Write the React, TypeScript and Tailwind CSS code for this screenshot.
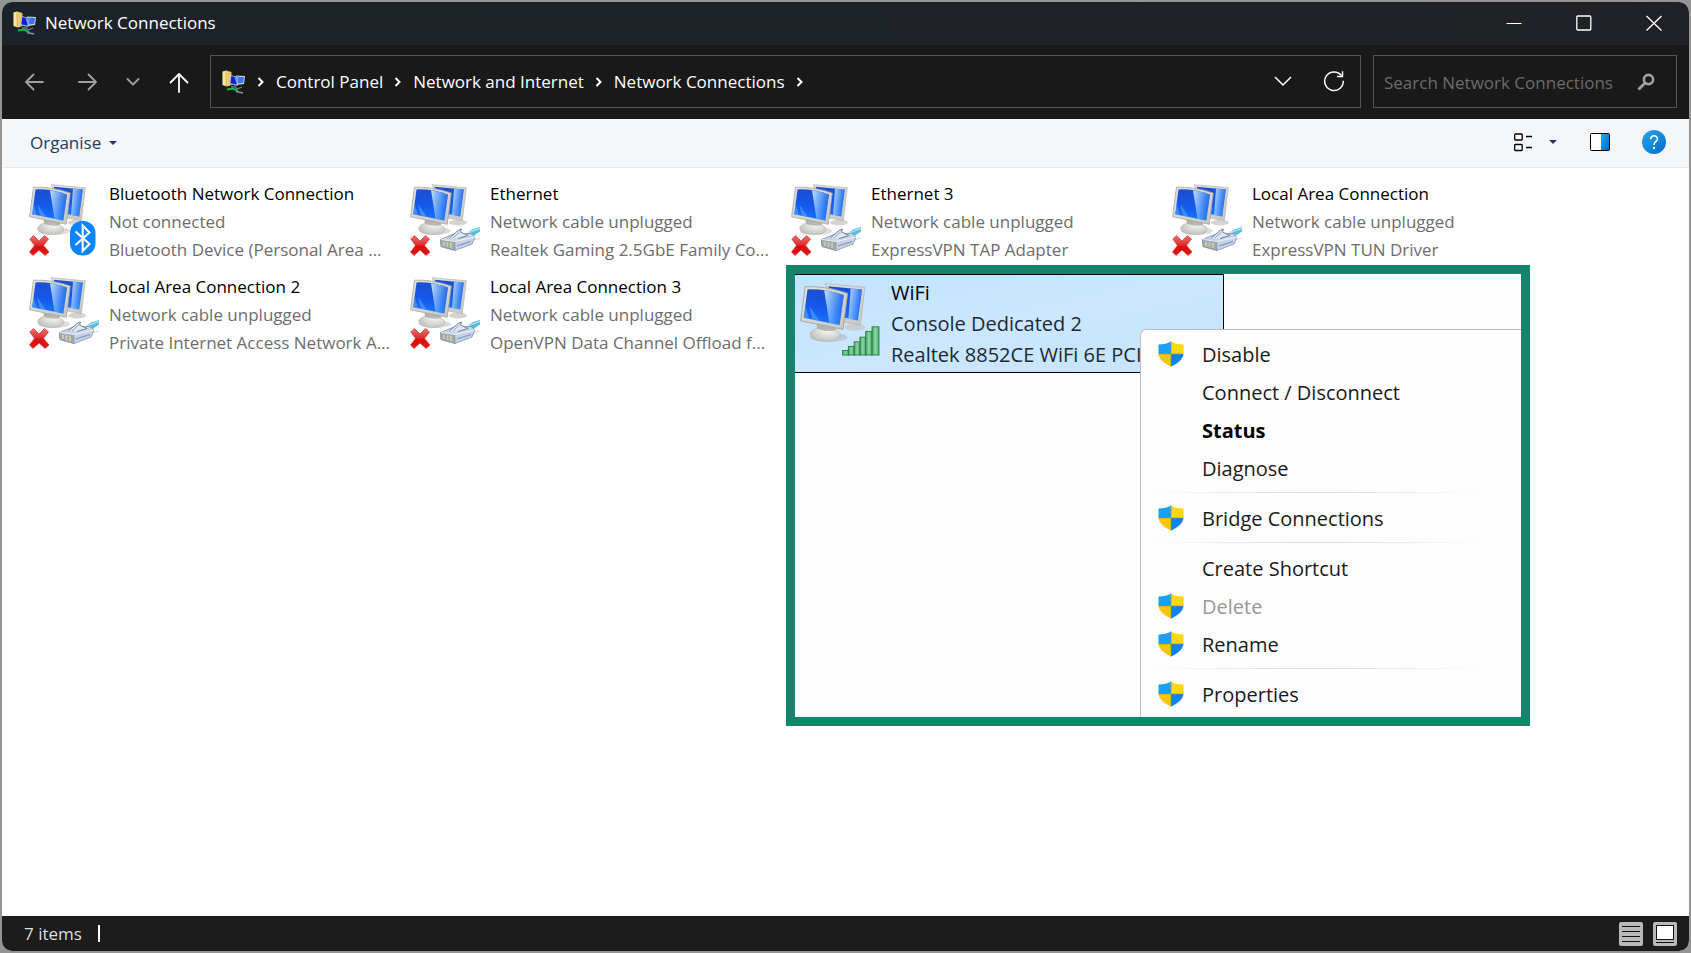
import { useState } from 'react';

type Badge = 'bluetooth' | 'cable' | 'signal';

interface Connection {
  name: string;
  status: string;
  device: string;
  badge: Badge;
}

const connections: Connection[] = [
  { name: 'Bluetooth Network Connection', status: 'Not connected', device: 'Bluetooth Device (Personal Area ...', badge: 'bluetooth' },
  { name: 'Ethernet', status: 'Network cable unplugged', device: 'Realtek Gaming 2.5GbE Family Co...', badge: 'cable' },
  { name: 'Ethernet 3', status: 'Network cable unplugged', device: 'ExpressVPN TAP Adapter', badge: 'cable' },
  { name: 'Local Area Connection', status: 'Network cable unplugged', device: 'ExpressVPN TUN Driver', badge: 'cable' },
  { name: 'Local Area Connection 2', status: 'Network cable unplugged', device: 'Private Internet Access Network A...', badge: 'cable' },
  { name: 'Local Area Connection 3', status: 'Network cable unplugged', device: 'OpenVPN Data Channel Offload f...', badge: 'cable' },
];

const menuGroups = [
  [
    { label: 'Disable', shield: true },
    { label: 'Connect / Disconnect' },
    { label: 'Status', bold: true },
    { label: 'Diagnose' },
  ],
  [{ label: 'Bridge Connections', shield: true }],
  [
    { label: 'Create Shortcut' },
    { label: 'Delete', shield: true, disabled: true },
    { label: 'Rename', shield: true },
  ],
  [{ label: 'Properties', shield: true }],
] as { label: string; shield?: boolean; bold?: boolean; disabled?: boolean }[][];

// ==========================================
// Icons
// ==========================================

// Gradients shared by every connection icon
function IconDefs() {
  return (
    <svg width="0" height="0" className="absolute" aria-hidden="true">
      <defs>
        <linearGradient id="screen" x1="0.3" y1="0" x2="0.2" y2="1">
          <stop offset="0" stopColor="#1b4fd0" />
          <stop offset="0.5" stopColor="#1458ea" />
          <stop offset="1" stopColor="#1a78ff" />
        </linearGradient>
        <linearGradient id="glare" x1="0" y1="0.2" x2="1" y2="0.6">
          <stop offset="0" stopColor="#bfe0ff" stopOpacity="0.95" />
          <stop offset="0.5" stopColor="#7db8ff" stopOpacity="0.7" />
          <stop offset="1" stopColor="#2f86ff" stopOpacity="0.3" />
        </linearGradient>
        <linearGradient id="frame" x1="0" y1="0" x2="1" y2="1">
          <stop offset="0" stopColor="#e4e4e1" />
          <stop offset="1" stopColor="#c6c6c2" />
        </linearGradient>
        <radialGradient id="stand" cx="0.6" cy="0.4" r="0.7">
          <stop offset="0" stopColor="#fafaf9" />
          <stop offset="1" stopColor="#bcbcb8" />
        </radialGradient>
        <linearGradient id="cross" x1="0" y1="0" x2="0" y2="1">
          <stop offset="0" stopColor="#ee7370" />
          <stop offset="0.45" stopColor="#e03030" />
          <stop offset="0.55" stopColor="#d81010" />
          <stop offset="1" stopColor="#e51414" />
        </linearGradient>
        <linearGradient id="bars" x1="0" y1="0" x2="1" y2="0">
          <stop offset="0" stopColor="#3fa563" />
          <stop offset="0.5" stopColor="#8ed6a2" />
          <stop offset="1" stopColor="#43a868" />
        </linearGradient>
        <linearGradient id="folder" x1="0" y1="0" x2="1" y2="0">
          <stop offset="0" stopColor="#fff1b0" />
          <stop offset="1" stopColor="#e0bb55" />
        </linearGradient>
        <linearGradient id="azure" x1="0" y1="0" x2="1" y2="1">
          <stop offset="0" stopColor="#27a9ea" />
          <stop offset="1" stopColor="#0069cf" />
        </linearGradient>
      </defs>
    </svg>
  );
}

function ConnectionIcon({ badge, className }: { badge: Badge; className: string }) {
  return (
    <svg viewBox="0 0 72 72" className={className} aria-hidden="true">
      {/* back monitor */}
      <ellipse cx="48" cy="38.500" rx="9" ry="3" fill="#c9c9c6" opacity="0.8" />
      <path d="M22 .7 56.300 3.800 52.300 36.500 38 34Z" fill="url(#frame)" stroke="#b5b5b1" strokeWidth=".7" strokeLinejoin="round" />
      <path d="M24.500 2.800 53.800 5.600 50.200 32.500 38 30Z" fill="url(#screen)" />
      <path d="M44 4.700 53.800 5.600 50.200 32.500 42 31Z" fill="url(#glare)" />
      {/* front monitor */}
      <ellipse cx="25" cy="47" rx="16" ry="4" fill="#8f8f8b" opacity="0.3" />
      <path d="M15 34 31 37.500 30.500 41C36 43 36 47 32 49 27 51.300 15 51 10.500 47.500 7 44.500 9 40.500 15 39.500Z" fill="url(#stand)" stroke="#b3b3af" strokeWidth=".6" />
      <path d="M15 35 31 38.500 30.500 41C26 42.500 19 41.500 15 39.500Z" fill="#9e9e9a" opacity="0.7" />
      <path d="M4.500 3.200Q23 2.500 41.300 9L37.300 40.300.6 32.800Z" fill="url(#frame)" stroke="#a3a39f" strokeWidth=".8" strokeLinejoin="round" />
      <path d="M6.500 5.400Q23 5 38 10.500L34.300 36.500 3.200 30.200Z" fill="url(#screen)" />
      <path d="M21 6.300Q30 7.500 38 10.500L34.300 36.500 25.500 34.700Z" fill="url(#glare)" />
      <path d="M4.800 20 8 31.200 3.200 30.200ZM8 20 17 33 11 31.800Z" fill="#58a4ff" opacity="0.6" />
      {badge !== 'signal' && (
        <path
          d="M4.500 51.500 10 57 15.500 51.500 19.500 55 14.500 61.500 20 68 16 71.500 10 66 4 71.500 .5 68 5.500 61.500 .8 55Z"
          fill="url(#cross)"
          stroke="#cf3331"
          strokeWidth=".7"
          strokeLinejoin="round"
        />
      )}
      {badge === 'bluetooth' && (
        <>
          <rect x="41" y="37" width="25.500" height="34.500" rx="12" fill="#0a84ff" />
          <path d="M46.500 47.500 60.500 60 53.700 67V41.500L60.500 48.500 46.500 61" fill="none" stroke="#fff" strokeWidth="2.100" />
        </>
      )}
      {badge === 'cable' && (
        <>
          <path d="M56 50 62 45.500 70 43 70 47.500 62 53Z" fill="#57bfdc" />
          <path d="M58 49 64 46.500 70 44.500" fill="none" stroke="#b5ecf6" strokeWidth="1.200" />
          <path d="M63 56 70 54" stroke="#d5d8dc" strokeWidth="1" />
          <path d="M30.500 55.500 44 50 61 49.500 65 53 62 60 45 66.500 31 62.500Z" fill="#c8d3e6" stroke="#8292aa" strokeWidth=".8" strokeLinejoin="round" />
          <path d="M30.500 55.500 45 58 45 66.500 31 62.500Z" fill="#9faab5" stroke="#8090a6" strokeWidth=".6" />
          <path d="M31 55.500 45 57.500 65 53" fill="none" stroke="#e9f0fa" strokeWidth="1.200" />
          <path d="M47 62 61 57.500" stroke="#8fa5cc" strokeWidth="1.700" />
          <path d="M34 58v4M37.500 58.500v4.500M41 59v5" stroke="#d6d487" strokeWidth="1.700" />
          <path d="M39.500 54 48 46.500 51.500 45 50.500 48 58 51.500 48 54.500" fill="#dfe8f5" stroke="#70829c" strokeWidth="1" strokeLinejoin="round" />
          <path d="M43 54 49.500 48" stroke="#8fa0b8" strokeWidth="1" />
        </>
      )}
      {badge === 'signal' && (
        <g fill="url(#bars)" stroke="#2d7d4a" strokeWidth=".8">
          <rect x="37" y="58.500" width="5" height="4" />
          <rect x="42" y="55" width="5" height="7.500" />
          <rect x="47" y="51" width="5" height="11.500" />
          <rect x="52" y="47" width="5" height="15.500" />
          <rect x="57" y="42" width="5.500" height="20.500" />
          <rect x="62.500" y="38" width="6" height="24.500" />
        </g>
      )}
    </svg>
  );
}

function FolderNetworkIcon() {
  return (
    <svg viewBox="0 0 24 24" className="size-6 shrink-0" aria-hidden="true">
      <path d="M.5 1.500 4 .5 9.500 2V15L5 16.500 .5 15Z" fill="url(#folder)" />
      <path d="M4 .5 4.500 16.500" stroke="#c9a23f" strokeWidth=".7" />
      <path d="M14 5.500 23 6 22 14 15 15Z" fill="#c9d2e2" />
      <path d="M15 6.500 22 7 21.200 13 15.500 13.500Z" fill="#3f72f2" />
      <path d="M8.500 5 16.500 7 15.500 16 7.500 14Z" fill="#b9c4da" />
      <path d="M9.300 6 15.600 7.600 14.800 14.800 8.400 13.200Z" fill="#0b1fd6" />
      <path d="M12.500 7 15.600 7.600 14.800 14.800Z" fill="#6aa0ff" />
      <path d="M9 17 13 16.500 15 19 20 17" fill="none" stroke="#6e7882" strokeWidth="1.300" />
      <path d="M5 19.500 11 18.500 16 21" fill="none" stroke="#12b552" strokeWidth="2" />
      <path d="M14 21.500 21 23" stroke="#8d949b" strokeWidth="1.600" />
    </svg>
  );
}

function ShieldIcon() {
  return (
    <svg viewBox="0 0 26 26" className="size-[26px]" aria-hidden="true">
      <path d="M13 .5C10 2.500 5 3.500 .5 3.500V13H13Z" fill="#1ba0f2" />
      <path d="M13 .5C16 2.500 21 3.500 25.500 3.500V13H13Z" fill="#ffd90a" />
      <path d="M.5 13C1.500 19 7 23 13 25.500V13Z" fill="#fcc40c" />
      <path d="M25.500 13C24.500 19 19 23 13 25.500V13Z" fill="#0a84ea" />
      <path d="M13 .5V25.500M.5 13H25.500" stroke="#8a9a4a" strokeWidth=".6" />
    </svg>
  );
}

function Crumb({ label }: { label: string }) {
  return (
    <>
      <svg viewBox="0 0 8 12" className="h-3 w-2 shrink-0" fill="none" stroke="#fff" strokeWidth="2" aria-hidden="true">
        <path d="M1.500 2 5.500 6 1.500 10" />
      </svg>
      {label && (
        <a href="#" className="whitespace-nowrap">
          {label}
        </a>
      )}
    </>
  );
}

function Caret() {
  return (
    <svg viewBox="0 0 8 4" className="h-1 w-2" fill="#1f3a63" aria-hidden="true">
      <path d="M0 0H8L4 4Z" />
    </svg>
  );
}

// ==========================================
// Sections
// ==========================================

function TitleBar() {
  return (
    <header className="flex h-[43px] shrink-0 items-center bg-linear-to-r from-[#1c2229] via-[#1d2226] to-[#202126] pb-[2px] pl-[11px] text-white">
      <FolderNetworkIcon />
      <h1 className="ml-2 flex-1">Network Connections</h1>
      <div className="flex h-full">
        <button aria-label="Minimise" className="flex w-[70px] items-center justify-center">
          <svg viewBox="0 0 16 16" className="size-4" stroke="#fff" aria-hidden="true">
            <path d="M.5 8.500H15.500" />
          </svg>
        </button>
        <button aria-label="Maximise" className="flex w-[70px] items-center justify-center">
          <svg viewBox="0 0 16 16" className="size-4" fill="none" stroke="#fff" strokeWidth="1.300" aria-hidden="true">
            <rect x=".8" y="1" width="14" height="14" rx="1" />
          </svg>
        </button>
        <button aria-label="Close" className="flex w-[70px] items-center justify-center">
          <svg viewBox="0 0 16 16" className="size-4" stroke="#fff" strokeWidth="1.300" aria-hidden="true">
            <path d="M.5 1 15.500 15.500M15.500 1 .5 15.500" />
          </svg>
        </button>
      </div>
    </header>
  );
}

function NavigationBar() {
  const [query, setQuery] = useState('');

  return (
    <nav className="flex h-[74px] shrink-0 items-center bg-[#191919] pr-3 pb-px text-white">
      <div className="flex w-[208px] items-center pl-[22px]">
        <button aria-label="Back" className="text-[#a0a0a0]">
          <svg viewBox="0 0 22 22" className="size-[22px]" fill="none" stroke="currentColor" strokeWidth="1.800" strokeLinecap="round" strokeLinejoin="round" aria-hidden="true">
            <path d="M19 11H2M9.500 3.500 2 11 9.500 18.500" />
          </svg>
        </button>
        <button aria-label="Forward" className="ml-[30px] text-[#a0a0a0]">
          <svg viewBox="0 0 22 22" className="size-[22px]" fill="none" stroke="currentColor" strokeWidth="1.800" strokeLinecap="round" strokeLinejoin="round" aria-hidden="true">
            <path d="M3 11H20M12.500 3.500 20 11 12.500 18.500" />
          </svg>
        </button>
        <button aria-label="Recent locations" className="ml-7 text-[#a0a0a0]">
          <svg viewBox="0 0 14 14" className="size-[14px]" fill="none" stroke="currentColor" strokeWidth="1.800" strokeLinecap="round" strokeLinejoin="round" aria-hidden="true">
            <path d="M1.500 4 7 9.500 12.500 4" />
          </svg>
        </button>
        <button aria-label="Up" className="ml-7">
          <svg viewBox="0 0 22 22" className="size-[22px]" fill="none" stroke="currentColor" strokeWidth="1.800" strokeLinecap="round" strokeLinejoin="round" aria-hidden="true">
            <path d="M11 21V3M2.500 11.500 11 3 19.500 11.500" />
          </svg>
        </button>
      </div>

      <div className="flex h-[53px] flex-1 items-center gap-[11px] border border-[#555] pl-[11px]">
        <FolderNetworkIcon />
        <Crumb label="Control Panel" />
        <Crumb label="Network and Internet" />
        <Crumb label="Network Connections" />
        <Crumb label="" />
        <button aria-label="Previous locations" className="mr-5 ml-auto">
          <svg viewBox="0 0 18 18" className="size-[18px]" fill="none" stroke="currentColor" strokeWidth="1.500" aria-hidden="true">
            <path d="M1 4 9 12 17 4" />
          </svg>
        </button>
        <button aria-label="Refresh" className="mr-[15px]">
          <svg viewBox="0 0 22 22" className="size-[22px]" fill="none" stroke="currentColor" strokeWidth="1.500" aria-hidden="true">
            <path d="M18.500 4.700A9.300 9.300 0 1 0 20.300 9.700" />
            <path d="M19.500 .3V5.500H14" />
          </svg>
        </button>
      </div>

      <label className="ml-3 flex h-[53px] w-[304px] items-center border border-[#555] pr-[21px] pl-[10px]">
        <input
          type="text"
          aria-label="Search Network Connections"
          placeholder="Search Network Connections"
          value={query}
          onChange={(e) => setQuery(e.target.value)}
          className="min-w-0 flex-1 bg-transparent pt-[2px] text-white outline-none placeholder:text-[#6b6b6b]"
        />
        <svg viewBox="0 0 18 18" className="size-[18px]" fill="none" stroke="#a0a0a0" aria-hidden="true">
          <circle cx="11.500" cy="6.500" r="4.600" strokeWidth="2.600" />
          <path d="M8 10 1.500 16.500" strokeWidth="3" />
        </svg>
      </label>
    </nav>
  );
}

function CommandBar() {
  return (
    <div className="flex h-[49px] shrink-0 items-center border-b border-[#e7e8e9] bg-[#f4f6f8] pr-[23px] pb-[2px] pl-7">
      <button className="flex items-center gap-2 pt-[2px] text-[#1f3a63]">
        Organise
        <Caret />
      </button>
      <button aria-label="Change your view" className="ml-auto flex items-center gap-4">
        <svg viewBox="0 0 20 20" className="size-5" fill="#fff" stroke="#000" strokeWidth="1.300" aria-hidden="true">
          <rect x="1.700" y="2" width="7.500" height="6" rx=".8" />
          <rect x="1.700" y="12.500" width="7.500" height="6" rx=".8" />
          <path d="M13 4.500h6M13 15.500h6" />
        </svg>
        <Caret />
      </button>
      <button aria-label="Show the preview pane" className="ml-[33px]">
        <svg viewBox="0 0 20 18" className="h-[18px] w-5" aria-hidden="true">
          <rect x=".5" y=".5" width="19" height="17" rx=".8" fill="#fff" stroke="#000" />
          <rect x="11" y="1" width="8" height="16" fill="url(#azure)" />
        </svg>
      </button>
      <button aria-label="Help" className="ml-8">
        <svg viewBox="0 0 24 24" className="size-6" aria-hidden="true">
          <circle cx="12" cy="12" r="12" fill="url(#azure)" />
          <path d="M8.800 9.200C8.800 4.500 15.500 4.800 15.500 8.800 15.500 11.500 12 11.500 12 15" fill="none" stroke="#fff" strokeWidth="1.600" />
          <circle cx="12" cy="18" r="1.200" fill="#fff" />
        </svg>
      </button>
    </div>
  );
}

function ConnectionTile({ connection }: { connection: Connection }) {
  return (
    <button className="flex items-start gap-2 text-left leading-7 whitespace-nowrap">
      <ConnectionIcon badge={connection.badge} className="mt-1 size-[72px] shrink-0" />
      <span className="flex flex-col text-[#6d6d6d]">
        <span className="text-black">{connection.name}</span>
        <span>{connection.status}</span>
        <span>{connection.device}</span>
      </span>
    </button>
  );
}

function ContextMenu() {
  return (
    <div role="menu" className="relative ml-[345px] rounded-tl-md border-t border-l border-[#bdbdbd] bg-[#fdfdfd] pt-[6px] pb-[3px]">
      {menuGroups.map((group, i) => (
        <div key={i} role="group">
          {i > 0 && (
            <hr className="mr-10 ml-2 h-3 border-0 bg-linear-to-r from-transparent via-[#d9d9d9] to-transparent bg-[length:100%_1px] bg-[position:0_4px] bg-no-repeat" />
          )}
          {group.map((item) => (
            <button
              key={item.label}
              role="menuitem"
              disabled={item.disabled}
              className="flex h-[38px] w-full items-center gap-[18px] pl-[17px] text-left text-[#1a1a1a] disabled:text-[#999]"
            >
              <span className="w-[26px] shrink-0 pb-[3px]">{item.shield && <ShieldIcon />}</span>
              <span className={item.bold ? 'font-bold text-black' : ''}>{item.label}</span>
            </button>
          ))}
        </div>
      ))}
    </div>
  );
}

function SelectedConnection() {
  return (
    <li className="relative">
      <div className="absolute -top-2 -left-[5px] w-[744px] border-[9px] border-[#12866c] bg-[#fdfdfd] pt-[55px] text-[20px]">
        <button className="absolute top-0 left-0 flex h-[99px] w-[429px] items-start gap-2 border-t border-r border-b border-black bg-linear-to-br from-[#c2e3ff] via-[#cce7ff] to-[#c6e4fe] pl-[5px] text-left leading-[31px] whitespace-nowrap">
          <ConnectionIcon badge="signal" className="mt-2 size-[83px] shrink-0" />
          <span className="mt-[2px] flex flex-col text-[#1c2a36]">
            <span className="text-black">WiFi</span>
            <span>Console Dedicated 2</span>
            <span>Realtek 8852CE WiFi 6E PCI</span>
          </span>
        </button>
        <ContextMenu />
      </div>
    </li>
  );
}

function StatusBar() {
  return (
    <footer className="flex h-[35px] shrink-0 items-center bg-[#1c1c1c] pr-3 pl-[22px] text-[#dedede]">
      <span>7 items</span>
      <span className="ml-4 h-[17px] w-[2px] bg-white" />
      <button aria-label="Details view" className="ml-auto">
        <svg viewBox="0 0 24 24" className="size-6" stroke="#111" aria-hidden="true">
          <rect width="24" height="24" rx="2" fill="#b9b9b9" stroke="none" />
          <path d="M3 4.500H21M3 9.500H21M3 14.500H21M3 19.500H21" />
        </svg>
      </button>
      <button aria-label="Large icons view" className="ml-[10px]">
        <svg viewBox="0 0 24 24" className="size-6" stroke="#111" aria-hidden="true">
          <rect width="24" height="24" rx="2" fill="#b9b9b9" stroke="none" />
          <rect x="3.500" y="3.500" width="17" height="14" fill="#fff" />
          <path d="M3 20.500H21" />
        </svg>
      </button>
    </footer>
  );
}

export default function App() {
  return (
    <div className="h-screen bg-[#949494] p-[2px] font-['Open_Sans','Noto_Sans',sans-serif] text-[17px]">
      <IconDefs />
      <div className="flex h-full flex-col overflow-hidden rounded-[10px] bg-white">
        <TitleBar />
        <NavigationBar />
        <CommandBar />
        <main className="min-h-0 flex-1 pt-3 pl-[27px]">
          <ul className="grid grid-cols-[repeat(auto-fill,381px)] gap-y-[9px]">
            {connections.map((connection) => (
              <li key={connection.name}>
                <ConnectionTile connection={connection} />
              </li>
            ))}
            <SelectedConnection />
          </ul>
        </main>
        <StatusBar />
      </div>
    </div>
  );
}
